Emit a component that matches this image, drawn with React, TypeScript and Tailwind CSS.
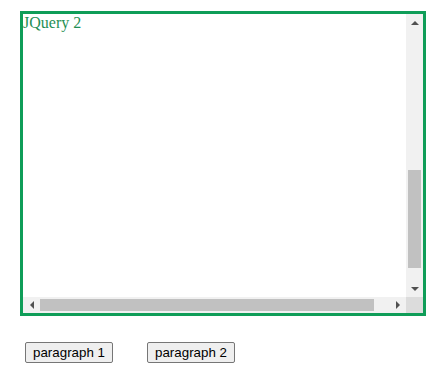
import React from "react";

const Arrow = ({ dir }: { dir: "up" | "down" | "left" | "right" }) => {
  const pts: Record<string, string> = {
    up: "0,4 4,0 8,4",
    down: "0,0 8,0 4,4",
    left: "4,0 4,8 0,4",
    right: "0,0 4,4 0,8",
  };
  const vertical = dir === "up" || dir === "down";
  return (
    <svg width={vertical ? 8 : 4} height={vertical ? 4 : 8} viewBox={vertical ? "0 0 8 4" : "0 0 4 8"}>
      <polygon points={pts[dir]} fill="#505050" />
    </svg>
  );
};

export default function App() {
  return (
    <div className="w-[440px] h-[380px] bg-white pl-[20px] pt-[11px]">
      <div className="w-[406px] h-[305px] border-[3px] border-[#0f9d58] flex flex-col">
        <div className="flex flex-1 min-h-0">
          <div className="flex-1 bg-white">
            <p className="text-[16px] leading-[18px] text-[#1f8f55] font-['Liberation_Serif',serif]">JQuery 2</p>
          </div>
          <div className="w-[17px] bg-[#f1f1f1] flex flex-col items-center">
            <div className="h-[17px] flex items-center justify-center">
              <Arrow dir="up" />
            </div>
            <div className="flex-1 w-full px-[2px] flex flex-col">
              <div className="h-[139px]" />
              <div className="h-[98px] bg-[#c1c1c1]" />
            </div>
            <div className="h-[17px] flex items-center justify-center">
              <Arrow dir="down" />
            </div>
          </div>
        </div>
        <div className="h-[16px] flex">
          <div className="flex-1 bg-[#f1f1f1] flex items-center">
            <div className="w-[17px] flex items-center justify-center">
              <Arrow dir="left" />
            </div>
            <div className="flex-1 h-full py-[2px] flex">
              <div className="w-[334px] bg-[#c1c1c1]" />
            </div>
            <div className="w-[17px] flex items-center justify-center">
              <Arrow dir="right" />
            </div>
          </div>
          <div className="w-[17px] bg-[#dcdcdc]" />
        </div>
      </div>
      <div className="flex gap-[34px] mt-[26px] pl-[5px] font-['Liberation_Sans',Arial,sans-serif]">
        <button className="h-[21px] w-[88px] text-[13.33px] text-black bg-[#efefef] border border-[#767676] rounded-[2px]">paragraph 1</button>
        <button className="h-[21px] w-[88px] text-[13.33px] text-black bg-[#efefef] border border-[#767676] rounded-[2px]">paragraph 2</button>
      </div>
    </div>
  );
}
